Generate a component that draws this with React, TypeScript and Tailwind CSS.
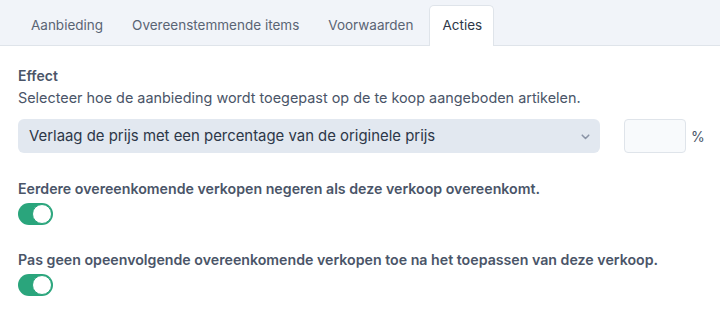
import React from "react";

function Toggle() {
  return (
    <div className="mt-[4px] flex h-[22px] w-[35px] items-center justify-end rounded-full bg-[#2aa57c] p-[1px]">
      <div className="h-[20px] w-[20px] rounded-full border border-[#2aa57c] bg-white" />
    </div>
  );
}

export default function App() {
  const tabs = ["Aanbieding", "Overeenstemmende items", "Voorwaarden", "Acties"];
  return (
    <div
      className="h-[323px] w-[720px] bg-white text-[14px] text-[#4a5568]"
      style={{ fontFamily: "Inter, 'Noto Sans', sans-serif" }}
    >
      <div className="flex h-[46px] items-end gap-[3px] border-b border-[#dfe4ea] bg-[#f1f4f9] pl-[18px] text-[13.5px]">
        {tabs.map((t) => {
          const active = t === "Acties";
          return (
            <div
              key={t}
              className={
                active
                  ? "-mb-px flex h-[41px] items-center rounded-t-[5px] border border-b-0 border-[#dfe4ea] bg-white pb-[1px] pl-[12px] pr-[11px] text-[#2d3748]"
                  : "flex h-[40px] items-center border border-transparent px-[12px] pt-[1px] text-[#5a6474]"
              }
            >
              {t}
            </div>
          );
        })}
      </div>
      <div className="px-[18px] pt-[20px]">
        <div className="text-[14px] font-semibold leading-[20px] text-[#4a5568]">Effect</div>
        <div className="mt-[2px] text-[14.4px] leading-[20px] text-[#4a5568]">
          Selecteer hoe de aanbieding wordt toegepast op de te koop aangeboden artikelen.
        </div>
        <div className="mt-[11px] flex items-center">
          <div className="flex h-[34px] w-[582px] shrink-0 items-center justify-between rounded-[6px] bg-[#e2e8f0] pl-[11px] pr-[8px] text-[14.9px] text-[#2d3748]">
            <span>Verlaag de prijs met een percentage van de originele prijs</span>
            <svg width="13" height="13" viewBox="0 0 20 20" fill="none" stroke="#8a94a6" strokeWidth="2.4" strokeLinecap="round" strokeLinejoin="round">
              <path d="M5 8l5 5 5-5" />
            </svg>
          </div>
          <div className="ml-[24px] h-[34px] w-[62px] shrink-0 rounded-[4px] border border-[#dfe4ea] bg-[#f8fafc]" />
          <span className="ml-[5px] shrink-0 text-[#4a5568]">%</span>
        </div>
        <div className="mt-[26px] text-[14.2px] font-semibold leading-[20px] text-[#4a5568]">
          Eerdere overeenkomende verkopen negeren als deze verkoop overeenkomt.
        </div>
        <Toggle />
        <div className="mt-[25px] text-[14.2px] font-semibold leading-[20px] text-[#4a5568]">
          Pas geen opeenvolgende overeenkomende verkopen toe na het toepassen van deze verkoop.
        </div>
        <Toggle />
      </div>
    </div>
  );
}
